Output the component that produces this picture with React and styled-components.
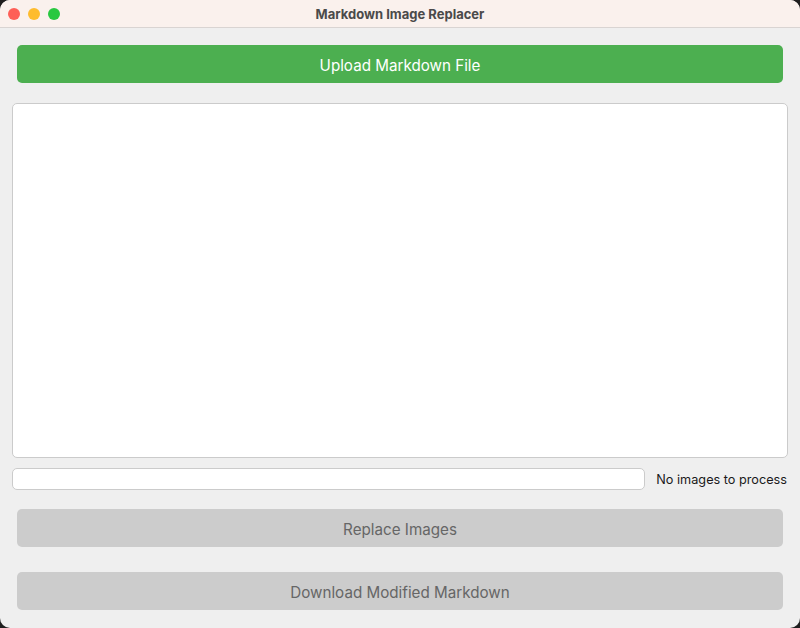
import React, { useState } from 'react'
import styled, { createGlobalStyle } from 'styled-components'

const Global = createGlobalStyle`
  html, body {
    margin: 0;
    padding: 0;
    background: #1e1e1e;
  }
  body {
    font-family: Inter, "Noto Sans", "Liberation Sans", sans-serif;
  }
`

const Window = styled.div`
  width: 800px;
  height: 628px;
  display: flex;
  flex-direction: column;
  background: #efefef;
  border-radius: 10px;
  overflow: hidden;
`

const TitleBar = styled.div`
  height: 28px;
  flex-shrink: 0;
  display: flex;
  align-items: center;
  position: relative;
  background: #faf1ed;
  border-bottom: 1px solid #d9d4d2;
  box-sizing: border-box;
`

const Lights = styled.div`
  display: flex;
  gap: 8px;
  padding-left: 8px;
`

const Light = styled.span`
  width: 12px;
  height: 12px;
  border-radius: 50%;
  background: ${p => p.color};
`

const Title = styled.div`
  position: absolute;
  left: 0;
  right: 0;
  text-align: center;
  font-size: 13px;
  font-weight: 700;
  color: #4a4a4a;
  pointer-events: none;
`

const Content = styled.div`
  flex: 1;
  display: flex;
  flex-direction: column;
  padding: 17px 12px 0 12px;
`

const Button = styled.button`
  margin: 0 5px;
  height: 38px;
  padding: 2px 0 0 0;
  border: none;
  border-radius: 5px;
  font-family: inherit;
  font-size: 15.2px;
  background: ${p => (p.primary ? '#4caf50' : '#cccccc')};
  color: ${p => (p.primary ? '#ffffff' : '#666666')};
  cursor: ${p => (p.disabled ? 'default' : 'pointer')};
`

const Editor = styled.textarea`
  margin-top: 20px;
  height: 355px;
  box-sizing: border-box;
  border: 1px solid #cbcbcb;
  border-radius: 5px;
  background: #ffffff;
  resize: none;
  outline: none;
  padding: 6px;
  font-family: inherit;
  font-size: 13px;
`

const StatusRow = styled.div`
  margin-top: 10px;
  display: flex;
  align-items: center;
  gap: 11px;
  margin-bottom: 19px;
`

const Progress = styled.div`
  flex: 1;
  height: 22px;
  box-sizing: border-box;
  border: 1px solid #cbcbcb;
  border-radius: 5px;
  background: #ffffff;
`

const StatusText = styled.span`
  font-size: 12.7px;
  color: #1a1a1a;
  padding-right: 1px;
`

const Stack = styled.div`
  display: flex;
  flex-direction: column;
  gap: 25px;
`

export default function App() {
  const [text, setText] = useState('')
  return (
    <>
      <Global />
      <Window>
        <TitleBar>
          <Lights>
            <Light color="#fe5f57" />
            <Light color="#febc2e" />
            <Light color="#28c840" />
          </Lights>
          <Title>Markdown Image Replacer</Title>
        </TitleBar>
        <Content>
          <Button primary>Upload Markdown File</Button>
          <Editor value={text} onChange={e => setText(e.target.value)} />
          <StatusRow>
            <Progress />
            <StatusText>No images to process</StatusText>
          </StatusRow>
          <Stack>
            <Button disabled>Replace Images</Button>
            <Button disabled>Download Modified Markdown</Button>
          </Stack>
        </Content>
      </Window>
    </>
  )
}
